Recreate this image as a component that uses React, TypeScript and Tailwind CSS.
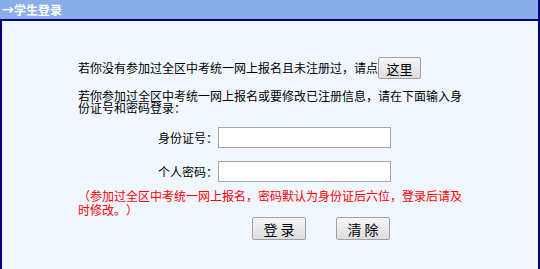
import React from "react";

export default function App() {
  const font = { fontFamily: '"Noto Sans CJK SC", "Noto Sans", sans-serif' };
  return (
    <div
      className="w-[540px] h-[269px] bg-[#f0f7ff] flex flex-col border-r-2 border-[#000080] text-black [text-spacing-trim:space-all]"
      style={font}
    >
      <div className="h-[19px] shrink-0 bg-[#8aaee8] text-white font-bold text-[12px] leading-[19px] pl-[2px]">
        →学生登录
      </div>
      <div className="flex-1 border-l-2 border-t-2 border-[#000080] pl-[76px] pt-[36px]">
        <div className="w-[392px] text-[12px] leading-[12px]">
          <div className="flex items-center h-[22px]">
            <span>若你没有参加过全区中考统一网上报名且未注册过，请点</span>
            <button className="w-[43px] h-[22px] border border-[#a0a0a0] rounded-[2px] bg-gradient-to-b from-[#f6f6f6] to-[#dddddd] text-[13px] leading-[13px]">
              这里
            </button>
          </div>
          <div className="mt-[11px] w-[386px]">
            若你参加过全区中考统一网上报名或要修改已注册信息，请在下面输入身份证号和密码登录：
          </div>
          <div className="mt-[13px] flex items-center">
            <span className="w-[140px] text-right">身份证号：</span>
            <input className="w-[173px] h-[21px] bg-white border border-[#a5a5a5] outline-none" />
          </div>
          <div className="mt-[13px] flex items-center">
            <span className="w-[140px] text-right">个人密码：</span>
            <input type="password" className="w-[173px] h-[21px] bg-white border border-[#a5a5a5] outline-none" />
          </div>
          <div className="mt-[7px] w-[386px] text-[#ff0000] leading-[14px]">
            （参加过全区中考统一网上报名，密码默认为身份证后六位，登录后请及时修改。）
          </div>
          <div className="flex pl-[174px] gap-[30px]">
            <button className="w-[54px] h-[23px] border border-[#a0a0a0] rounded-[2px] bg-gradient-to-b from-[#f6f6f6] to-[#dddddd] text-[14px] leading-[14px]">
              登 录
            </button>
            <button className="w-[54px] h-[23px] border border-[#a0a0a0] rounded-[2px] bg-gradient-to-b from-[#f6f6f6] to-[#dddddd] text-[14px] leading-[14px]">
              清 除
            </button>
          </div>
        </div>
      </div>
    </div>
  );
}
